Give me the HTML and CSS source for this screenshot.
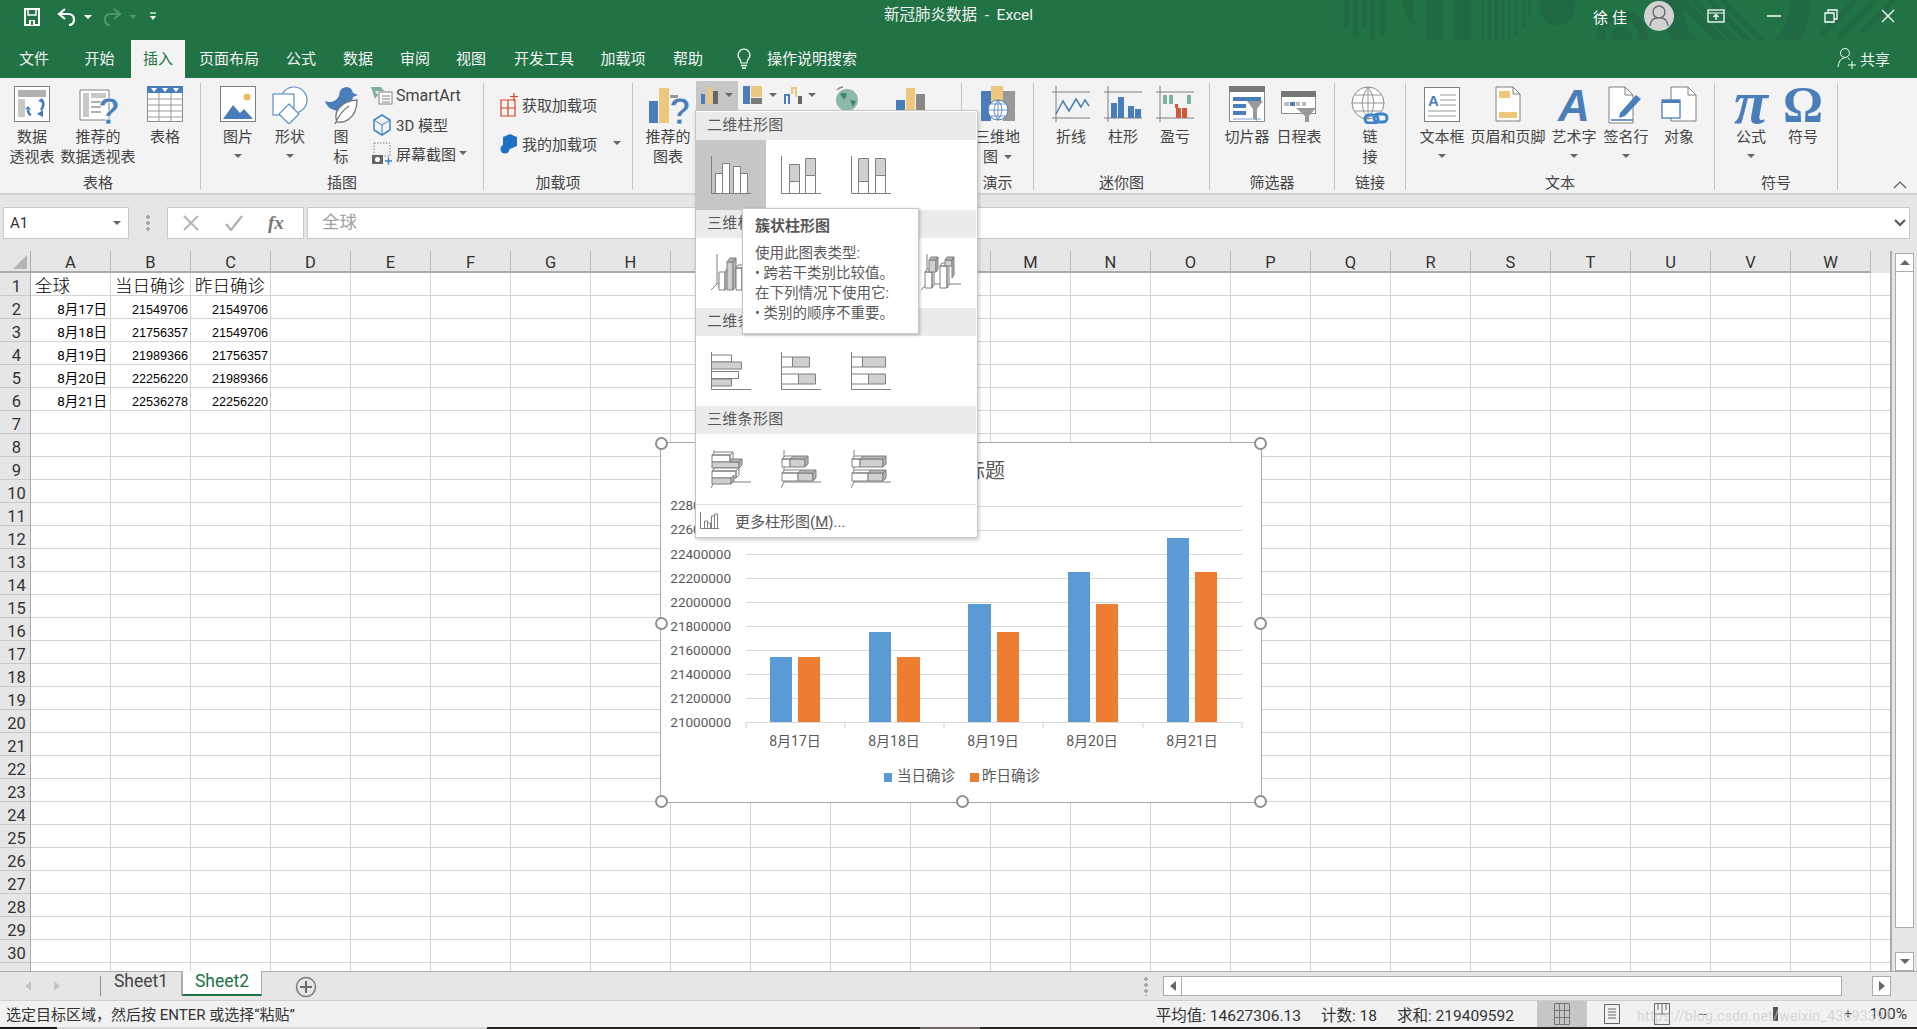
FILE: index.html
```html
<!DOCTYPE html>
<html lang="zh-CN">
<head>
<meta charset="utf-8">
<title>新冠肺炎数据 - Excel</title>
<link rel="stylesheet" href="styles.css">
</head>
<body>
<div class="app">
  <header class="titlebar">
    <svg class="deco" width="617" height="78" viewBox="1300 0 617 78">
      <g fill="#216845">
        <rect x="1344" y="0" width="5" height="29"/><rect x="1353" y="0" width="5" height="38"/><rect x="1362" y="0" width="5" height="29"/><rect x="1370" y="0" width="5" height="49"/><rect x="1380" y="0" width="5" height="35"/>
        <path d="M1402 0h11v27q-8-10-11-27z"/><path d="M1426 0h17v51q-9-3-17-9z"/><path d="M1455 0h16v57q-8 0-16-2z"/>
        <rect x="1481" y="0" width="3" height="54"/><rect x="1488" y="0" width="3" height="52"/><rect x="1495" y="0" width="3" height="50"/><rect x="1501" y="0" width="3" height="47"/><rect x="1508" y="0" width="3" height="42"/><rect x="1515" y="0" width="3" height="36"/><rect x="1522" y="0" width="3" height="28"/><rect x="1528" y="0" width="3" height="17"/>
        <circle cx="1557" cy="7" r="18"/><circle cx="1622" cy="36" r="10"/>
      </g>
      <circle cx="1622" cy="36" r="21" fill="none" stroke="#216845" stroke-width="9"/>
      <circle cx="1736" cy="3" r="64" fill="none" stroke="#216845" stroke-width="20"/>
      <g stroke="#216845" stroke-width="5" fill="none">
        <path d="M1678 0l66 68M1668 12l50 54M1682 0l70 68M1694 0l66 66M1708 0l60 60M1722 0l54 54"/>
        <path d="M1822 34l34-34M1838 38l38-38M1862 32l32-32"/>
      </g>
    </svg>
    <div class="qat">
      <svg class="q-save" width="18" height="18" viewBox="0 0 18 18"><path d="M2 1h14v16H2z" fill="none" stroke="#fff" stroke-width="2"/><path d="M5 1h8v6H5z" fill="none" stroke="#fff" stroke-width="1.5"/><path d="M6 12h6v5H6z" fill="#fff"/><path d="M8 13h2v4H8z" fill="#217346"/></svg>
      <svg class="q-undo" width="20" height="20" viewBox="0 0 20 20"><path d="M8 2L2 7l6 5" fill="none" stroke="#fff" stroke-width="2.2"/><path d="M3 7h8q6 0 6 5.500t-5 5.500" fill="none" stroke="#fff" stroke-width="2.2"/></svg>
      <i class="caret caret-w"></i>
      <svg class="q-redo" width="20" height="20" viewBox="0 0 20 20"><path d="M12 2l6 5-6 5" fill="none" stroke="#4f9370" stroke-width="2.2"/><path d="M17 7H9q-6 0-6 5.500t5 5.500" fill="none" stroke="#4f9370" stroke-width="2.200"/></svg>
      <i class="caret caret-dim"></i>
      <svg class="q-more" width="8" height="10" viewBox="0 0 8 10"><path d="M1 1h6" stroke="#fff" stroke-width="1.200"/><path d="M1 4h6L4 8z" fill="#fff"/></svg>
    </div>
    <div class="doc-title">新冠肺炎数据&nbsp; - &nbsp;Excel</div>
    <div class="winctl">
      <span class="user">徐佳</span>
      <svg class="avatar" width="30" height="30" viewBox="0 0 30 30"><circle cx="15" cy="15" r="15" fill="#d2d2d2"/><circle cx="15" cy="11" r="6" fill="none" stroke="#666" stroke-width="1.300"/><path d="M6 25q1-8 7-8M24 25q-1-8-7-8" fill="none" stroke="#666" stroke-width="1.300"/></svg>
      <svg class="w-disp" width="18" height="14" viewBox="0 0 18 14"><rect x="1" y="1" width="16" height="12" fill="none" stroke="#fff" stroke-width="1.300"/><path d="M1 4h16" stroke="#fff"/><path d="M9 11V6M6.500 8L9 5.500 11.500 8" fill="none" stroke="#fff" stroke-width="1.300"/></svg>
      <svg class="w-min" width="14" height="2" viewBox="0 0 14 2"><path d="M0 1h14" stroke="#fff" stroke-width="1.500"/></svg>
      <svg class="w-max" width="14" height="14" viewBox="0 0 14 14"><path d="M1 4h9v9H1zM4 4V1h9v9h-3" fill="none" stroke="#fff" stroke-width="1.300"/></svg>
      <svg class="w-close" width="14" height="14" viewBox="0 0 14 14"><path d="M1 1l12 12M13 1L1 13" stroke="#fff" stroke-width="1.300"/></svg>
    </div>
  </header>

  <nav class="tabbar">
    <span class="tab t-file">文件</span>
    <span class="tab t-home">开始</span>
    <span class="tab t-active">插入</span>
    <span class="tab t-page">页面布局</span>
    <span class="tab t-form">公式</span>
    <span class="tab t-data">数据</span>
    <span class="tab t-rev">审阅</span>
    <span class="tab t-view">视图</span>
    <span class="tab t-dev">开发工具</span>
    <span class="tab t-add">加载项</span>
    <span class="tab t-help">帮助</span>
    <svg class="bulb" width="16" height="22" viewBox="0 0 16 22"><path d="M5 15q0-3-2-5-2-3 0-6 2-3 5-3t5 3q2 3 0 6-2 2-2 5z" fill="none" stroke="#fff" stroke-width="1.200"/><path d="M5 17.500h6M6 20h4" stroke="#fff" stroke-width="1.300"/></svg>
    <span class="tab t-search">操作说明搜索</span>
    <span class="share">
      <svg width="20" height="22" viewBox="0 0 20 22"><circle cx="8" cy="6" r="4.500" fill="none" stroke="#fff"/><path d="M1 20q1-8 6-9M11 11q1 .500 2 2" fill="none" stroke="#fff"/><path d="M11 18h8M15 14v8" stroke="#fff"/></svg>
      共享
    </span>
  </nav>

  <section class="ribbon">
    <div class="group g1">
      <div class="items">
        <div class="big w64">
          <div class="ico"><svg width="36" height="36" viewBox="0 0 36 36"><rect x=".5" y=".5" width="35" height="35" fill="#fff" stroke="#808080"/><rect x="4" y="4" width="28" height="7" fill="#b0b0b0"/><rect x="4" y="13" width="7" height="18" fill="#c8c8c8"/><path d="M17 29q-3-1-3-5M28 14q3 5-1 10" fill="none" stroke="#3e78b5" stroke-width="2.500"/><path d="M11 23l3-3 3 4zM24 15l4-3 2 5zM23 28l6-4v7z" fill="#3e78b5"/></svg></div>
        <div class="lbl">数据<br>透视表</div></div>
        <div class="big w68">
          <div class="ico"><svg class="over" width="38" height="38" viewBox="0 0 38 38"><path d="M1 4h29v30H1z" fill="#fff" stroke="#808080"/><rect x="4" y="7" width="6" height="24" fill="#c8c8c8"/><rect x="12" y="7" width="15" height="5" fill="#c8c8c8"/><path d="M12 16h10M12 21h10M12 26h10" stroke="#b0b0b0" stroke-width="2"/><text x="19" y="38" class="qmark">?</text></svg></div>
        <div class="lbl">推荐的<br>数据透视表</div></div>
        <div class="big w66">
          <div class="ico"><svg width="36" height="36" viewBox="0 0 36 36"><rect x=".5" y=".5" width="35" height="35" fill="#fff" stroke="#8a8a8a"/><rect x="0" y="0" width="36" height="7" fill="#4a7eba"/><path d="M4 2h6l-3 4zM15 2h6l-3 4zM26 2h6l-3 4z" fill="#fff"/><path d="M0 13h36M0 19h36M0 25h36M0 31h36M12 7v29M24 7v29" stroke="#9a9a9a"/></svg></div>
        <div class="lbl">表格</div></div>
      </div>
      <div class="glabel">表格</div>
    </div>

    <div class="group g2">
      <div class="items">
        <div class="big w52">
          <div class="ico"><svg width="36" height="36" viewBox="0 0 36 36"><rect x=".5" y=".5" width="35" height="35" fill="#fff" stroke="#808080"/><circle cx="27" cy="11" r="3.500" fill="#ecb866"/><path d="M3 33l10-14 7 8 4-4 9 10z" fill="#4a7eba"/></svg></div>
        <div class="lbl">图片</div><i class="caret"></i></div>
        <div class="big w52">
          <div class="ico"><svg width="38" height="38" viewBox="0 0 38 38" fill="#fff" stroke="#5b8fc7" stroke-width="1.200"><circle cx="23" cy="14" r="13"/><rect x="2" y="8" width="21" height="21"/><path d="M18 18l10 10-10 10-10-10z"/></svg></div>
        <div class="lbl">形状</div><i class="caret"></i></div>
        <div class="big w50">
          <div class="ico"><svg width="36" height="38" viewBox="0 0 36 38"><path d="M2 15q5 2 9 0 3-1 5-5 0-8 7-9 6 0 7 6l5 2-5 2q-1 7-6 10-5 6-13 3Q4 22 2 15z" fill="#4a7eba"/><path d="M14 36q-3-8 2-14 5-7 18-8 0 13-8 19-5 4-12 3zM12 38q5-12 14-18" fill="#fff" stroke="#777" stroke-width="1.300"/></svg></div>
        <div class="lbl">图<br>标</div></div>
        <div class="small-col">
          <div class="sm"><svg width="22" height="18" viewBox="0 0 22 18"><path d="M0 0h10l3 4H4l3 4-3 4z" fill="#7eb09b"/><rect x="8" y="5" width="13" height="12" fill="#fff" stroke="#808080"/><path d="M11 9h8M11 12h8M11 15h8" stroke="#808080"/></svg><span class="lat">SmartArt</span></div>
          <div class="sm"><svg width="22" height="24" viewBox="0 0 22 24" fill="none" stroke="#3d85c6" stroke-width="1.500"><path d="M11 2l8 5v10l-8 5-8-5V7z"/><path d="M3 7l8 5 8-5M11 12v10" stroke-width="1"/></svg><span>3D 模型</span></div>
          <div class="sm"><svg width="22" height="24" viewBox="0 0 22 24"><rect x="3" y="1" width="16" height="13" fill="none" stroke="#808080" stroke-dasharray="1.500 1.500"/><rect x="1" y="13" width="11" height="9" fill="#666"/><circle cx="6.500" cy="17.500" r="2.500" fill="#fff"/><path d="M14 19h7M17.500 15.500v7" stroke="#3d85c6" stroke-width="1.500"/></svg><span>屏幕截图</span><i class="caret inline tight"></i></div>
        </div>
      </div>
      <div class="glabel">插图</div>
    </div>

    <div class="group g3">
      <div class="items addins">
        <div class="sm2"><svg width="18" height="26" viewBox="0 0 18 26" fill="none" stroke="#d24726" stroke-width="1.200"><path d="M1 8h14v16H1zM1 16h14M8 8v16"/><path d="M14 1v8M10 4.500h8"/></svg><span>获取加载项</span></div>
        <div class="sm2"><svg width="18" height="24" viewBox="0 0 18 24"><path d="M8 1l7 3v9l-7 3-7-3V4z" transform="translate(2 1)" fill="#1f71c4"/><circle cx="5" cy="17" r="4.500" fill="#1f71c4"/></svg><span>我的加载项</span><i class="caret inline wide"></i></div>
      </div>
      <div class="glabel">加载项</div>
    </div>

    <div class="group g4">
      <div class="items">
        <div class="big w56">
          <div class="ico"><svg class="over" width="40" height="38" viewBox="0 0 40 38"><rect x="1" y="15" width="9" height="22" fill="#4a7eba"/><rect x="11" y="2" width="10" height="35" fill="#ecc77c"/><rect x="22" y="9" width="8" height="3" fill="#999"/><text x="21" y="38" class="qmark">?</text></svg></div>
        <div class="lbl">推荐的<br>图表</div></div>
        <div class="mini hot"><svg width="18" height="20" viewBox="0 0 18 20"><rect x="0" y="8" width="4" height="10" fill="#4a7eba"/><rect x="6" y="1" width="5" height="17" fill="#ecc77c"/><rect x="12" y="5" width="5" height="13" fill="#666"/></svg><i class="caret inline"></i></div>
        <div class="mini m2"><svg width="20" height="20" viewBox="0 0 20 20"><rect x="0" y="0" width="7" height="18" fill="#4a7eba"/><rect x="8" y="0" width="11" height="11" fill="#ecc77c"/><rect x="8" y="12" width="11" height="6" fill="#7a7a7a"/></svg><i class="caret inline"></i></div>
        <div class="mini m3"><svg width="18" height="20" viewBox="0 0 18 20"><path d="M0 8h6v10H4V10H2v8H0z" fill="#4a7eba"/><path d="M7 1h6v10h-2V3H9v5H7z" fill="#ecc77c"/><rect x="14" y="10" width="4" height="8" fill="#666"/></svg><i class="caret inline"></i></div>
        <div class="mini m4"><svg width="24" height="26" viewBox="0 0 24 26"><circle cx="13" cy="14" r="11" fill="#8cb9a8"/><path d="M6 8q5-3 7 1l-3 5zM16 14l6 1-3 6z" fill="#3f8a6f"/><path d="M3 4q3-3 6-3" stroke="#888" stroke-width="1.500" fill="none"/></svg></div>
        <div class="mini m5"><svg width="38" height="30" viewBox="0 0 38 30"><rect x="0" y="14" width="9" height="16" fill="#4a7eba"/><rect x="10" y="2" width="9" height="28" fill="#ecc77c"/><rect x="20" y="8" width="9" height="22" fill="#888"/></svg></div>
      </div>
      <div class="glabel">图表</div>
    </div>

    <div class="group g5">
      <div class="items">
        <div class="big wfull">
          <div class="ico"><svg width="36" height="36" viewBox="0 0 36 36"><rect x="1" y="5" width="10" height="30" fill="#4a7eba"/><rect x="11" y="0" width="12" height="30" fill="#ecc77c"/><rect x="23" y="5" width="12" height="30" fill="#999"/><circle cx="18" cy="24" r="10" fill="#fff" stroke="#4a7eba"/><path d="M8 24h20M18 14v20M11 18h14M11 30h14M18 14q-8 10 0 20M18 14q8 10 0 20" fill="none" stroke="#4a7eba" stroke-width=".8"/></svg></div>
        <div class="lbl">三维地<br>图<i class="caret inline"></i></div></div>
      </div>
      <div class="glabel">演示</div>
    </div>

    <div class="group g6">
      <div class="items">
        <div class="big w52">
          <div class="ico"><svg width="38" height="36" viewBox="0 0 38 36" fill="none"><path d="M0 6h38M0 32h38M4 0v36" stroke="#808080"/><path d="M4 28l7-13 6 10 7-12 5 8 4-7 4 6" stroke="#4a7eba" stroke-width="1.500"/></svg></div>
        <div class="lbl">折线</div></div>
        <div class="big w52">
          <div class="ico"><svg width="38" height="36" viewBox="0 0 38 36"><path d="M0 6h38M0 32h38M4 0v36" stroke="#808080" fill="none"/><path d="M7 17h6v15H7zM14 11h6v21h-6zM24 20h6v12h-6zM31 23h6v9h-6z" fill="#4a7eba"/></svg></div>
        <div class="lbl">柱形</div></div>
        <div class="big w52">
          <div class="ico"><svg width="38" height="36" viewBox="0 0 38 36"><path d="M0 6h38M0 32h38M4 0v36" stroke="#808080" fill="none"/><path d="M7 9h4v9H7zM13 9h4v9h-4zM31 9h4v9h-4z" fill="#7eb09b"/><path d="M19 18h3v4h-3zM20 22h5v10h-5zM26 22h5v10h-5z" fill="#d2583a"/></svg></div>
        <div class="lbl">盈亏</div></div>
      </div>
      <div class="glabel">迷你图</div>
    </div>

    <div class="group g7">
      <div class="items">
        <div class="big w52">
          <div class="ico"><svg width="36" height="36" viewBox="0 0 36 36"><rect x=".5" y=".5" width="35" height="35" fill="#fff" stroke="#8a8a8a"/><rect width="36" height="6" fill="#777"/><path d="M4 11h28v4H4zM4 18h13v4H4zM4 25h13v4H4z" fill="#4a7eba"/><path d="M4 32h28v2H4z" fill="#bcd0e6"/><path d="M18 15h16l-6 8v12l-4-3v-9z" fill="#999"/></svg></div>
        <div class="lbl">切片器</div></div>
        <div class="big w52">
          <div class="ico"><svg width="36" height="36" viewBox="0 0 36 36"><rect x=".5" y="5.500" width="34" height="22" fill="#fff" stroke="#8a8a8a"/><rect y="5" width="35" height="6" fill="#777"/><path d="M3 16h5v4H3zM15 16h4v4h-4zM21 16h4v4h-4z" fill="#bbb"/><path d="M9 16h5v4H9z" fill="#4a7eba"/><path d="M15 22h20l-7 8v6h-4v-6z" fill="#999"/></svg></div>
        <div class="lbl">日程表</div></div>
      </div>
      <div class="glabel">筛选器</div>
    </div>

    <div class="group g8">
      <div class="items">
        <div class="big wfull">
          <div class="ico"><svg width="38" height="38" viewBox="0 0 38 38"><circle cx="17" cy="17" r="16" fill="#fff" stroke="#8a8a8a"/><path d="M1 17h32M17 1v32M4 9h26M4 25h26M17 1q-12 16 0 32M17 1q12 16 0 32" fill="none" stroke="#8a8a8a" stroke-width=".9"/><rect x="14" y="29" width="13" height="8" rx="4" fill="none" stroke="#3d85c6" stroke-width="3"/><rect x="23" y="28" width="13" height="8" rx="4" fill="none" stroke="#3d85c6" stroke-width="3"/></svg></div>
        <div class="lbl">链<br>接</div></div>
      </div>
      <div class="glabel">链接</div>
    </div>

    <div class="group g9">
      <div class="items">
        <div class="big w58">
          <div class="ico"><svg width="36" height="36" viewBox="0 0 36 36"><rect x=".5" y="1.500" width="35" height="34" fill="#fff" stroke="#808080"/><text x="4" y="20" class="letter-a">A</text><path d="M16 9h16M16 14h16M16 19h16M4 25h28M4 30h28" stroke="#999"/></svg></div>
        <div class="lbl">文本框</div><i class="caret"></i></div>
        <div class="big w74">
          <div class="ico"><svg width="26" height="36" viewBox="0 0 26 36"><path d="M1 1h17l7 7v27H1z" fill="#fff" stroke="#808080"/><path d="M18 1v7h7" fill="none" stroke="#808080"/><rect x="4" y="5" width="11" height="7" fill="#ecc77c"/><rect x="4" y="26" width="18" height="6" fill="#ecc77c"/></svg></div>
        <div class="lbl">页眉和页脚</div></div>
        <div class="big w52 gap3">
          <div class="ico"><span class="arttext">A</span></div>
        <div class="lbl">艺术字</div><i class="caret"></i></div>
        <div class="big w52">
          <div class="ico"><svg width="36" height="38" viewBox="0 0 36 38"><path d="M1 1h16l8 8v28H1z" fill="#fff" stroke="#808080"/><path d="M17 1v8h8" fill="none" stroke="#808080"/><path d="M12 27l16-18 5 4-16 17-6 2z" fill="#4a7eba"/><path d="M3 34h22" stroke="#4a7eba" stroke-width="1.500"/></svg></div>
        <div class="lbl">签名行</div><i class="caret"></i></div>
        <div class="big w54">
          <div class="ico"><svg width="36" height="36" viewBox="0 0 36 36"><path d="M10 1h17l8 8v26H10z" fill="#fff" stroke="#808080"/><path d="M27 1v8h8" fill="none" stroke="#808080"/><rect x="1" y="14" width="18" height="18" fill="#fff" stroke="#4a7eba" stroke-width="1.300"/><rect x="1" y="14" width="18" height="3" fill="#4a7eba"/></svg></div>
        <div class="lbl">对象</div></div>
      </div>
      <div class="glabel">文本</div>
    </div>

    <div class="group g10">
      <div class="items">
        <div class="big w52">
          <div class="ico"><span class="sym pi">π</span></div>
        <div class="lbl">公式</div><i class="caret"></i></div>
        <div class="big w52">
          <div class="ico"><span class="sym omega">Ω</span></div>
        <div class="lbl">符号</div></div>
      </div>
      <div class="glabel">符号</div>
    </div>

    <div class="collapse"><svg width="14" height="8" viewBox="0 0 14 8"><path d="M1 7l6-6 6 6" fill="none" stroke="#555" stroke-width="1.100"/></svg></div>
  </section>

  <section class="formula">
    <div class="namebox"><span>A1</span><i class="caret"></i></div>
    <div class="grip"></div>
    <div class="fbtns">
      <svg width="16" height="16" viewBox="0 0 16 16"><path d="M1 1l14 14M15 1L1 15" stroke="#b5b5b5" stroke-width="2"/></svg>
      <svg width="18" height="16" viewBox="0 0 18 16"><path d="M1 9l5 6L17 1" fill="none" stroke="#b5b5b5" stroke-width="2.500"/></svg>
      <span class="fx">fx</span>
    </div>
    <div class="finput"><span>全球</span><svg class="fdrop" width="12" height="8" viewBox="0 0 12 8"><path d="M1 1l5 5 5-5" fill="none" stroke="#555" stroke-width="2"/></svg></div>
  </section>

  <section class="sheet">
    <div class="grid-wrap">
      <div class="colhead">
        <div class="corner"><i></i></div>
        <span>A</span><span>B</span><span>C</span><span>D</span><span>E</span><span>F</span><span>G</span><span>H</span><span>I</span><span>J</span><span>K</span><span>L</span><span>M</span><span>N</span><span>O</span><span>P</span><span>Q</span><span>R</span><span>S</span><span>T</span><span>U</span><span>V</span><span>W</span>
      </div>
      <div class="gridbody">
        <div class="rowhead">
          <span>1</span><span>2</span><span>3</span><span>4</span><span>5</span><span>6</span><span>7</span><span>8</span><span>9</span><span>10</span><span>11</span><span>12</span><span>13</span><span>14</span><span>15</span><span>16</span><span>17</span><span>18</span><span>19</span><span>20</span><span>21</span><span>22</span><span>23</span><span>24</span><span>25</span><span>26</span><span>27</span><span>28</span><span>29</span><span>30</span>
        </div>
        <div class="cells">
          <div class="c-t">全球</div><div class="c-t">当日确诊</div><div class="c-t">昨日确诊</div>
          <div class="c-d">8月17日</div><div class="c-n">21549706</div><div class="c-n">21549706</div>
          <div class="c-d">8月18日</div><div class="c-n">21756357</div><div class="c-n">21549706</div>
          <div class="c-d">8月19日</div><div class="c-n">21989366</div><div class="c-n">21756357</div>
          <div class="c-d">8月20日</div><div class="c-n">22256220</div><div class="c-n">21989366</div>
          <div class="c-d">8月21日</div><div class="c-n">22536278</div><div class="c-n">22256220</div>
        </div>
      </div>
    </div>
    <div class="vscroll">
      <div class="sbtn"><i class="tri-up"></i></div>
      <div class="vthumb"></div>
      <div class="sbtn"><i class="tri-down"></i></div>
    </div>
  </section>

  <section class="sheetbar">
    <div class="navs"><i class="tl"></i><i class="tr"></i></div>
    <div class="stab">Sheet1</div>
    <div class="stab active">Sheet2</div>
    <svg class="addsheet" width="22" height="22" viewBox="0 0 22 22"><circle cx="11" cy="11" r="9.500" fill="none" stroke="#7a7a7a" stroke-width="1.500"/><path d="M11 5v12M5 11h12" stroke="#6a6a6a" stroke-width="2"/></svg>
    <div class="hscroll">
      <div class="grip h"></div>
      <div class="hbtn"><i class="tl dark"></i></div>
      <div class="hthumb"></div>
      <div class="hbtn"><i class="tr dark"></i></div>
    </div>
  </section>

  <footer class="status">
    <span class="msg">选定目标区域，然后按 ENTER 或选择“粘贴”</span>
    <span class="st s1">平均值: 14627306.13</span>
    <span class="st s2">计数: 18</span>
    <span class="st s3">求和: 219409592</span>
    <span class="view on"><svg width="16" height="22" viewBox="0 0 16 22"><path d="M.5 .5h15v21H.5zM.5 7.500h15M.5 14.500h15M5.500 .5v21M10.500 .5v21" fill="none" stroke="#777"/></svg></span>
    <span class="view"><svg width="16" height="20" viewBox="0 0 16 20"><path d="M.5 .5h15v19H.5z" fill="none" stroke="#666"/><path d="M4 5h8M4 8h8M4 11h8M4 14h8" stroke="#666"/></svg></span>
    <span class="view"><svg width="16" height="22" viewBox="0 0 16 22" fill="none" stroke="#666"><path d="M.5 .5h15v21H.5zM0 11h16M8 0v11M4 0v7M12 0v7"/></svg></span>
    <span class="zoomer"><i class="zminus"></i><i class="zthumb"></i><i class="zplus">+</i></span>
    <span class="pct">100%</span>
    <span class="watermark">https://blog.csdn.net/weixin_43693391</span>
  </footer>
  <div class="edge"><i class="e1"></i><i class="e2"></i><i class="e3"></i><i class="e4"></i><i class="e5"></i></div>

  <div class="chart">
    <svg width="600" height="359" viewBox="661 443 600 359">
      <rect x="661" y="443" width="600" height="359" fill="#fff"/>
      <text x="965" y="478" class="ch-title" text-anchor="middle">图表标题</text>
      <g stroke="#d9d9d9" stroke-width="1.200">
        <path d="M746 506.500h496M746 530.500h496M746 554.500h496M746 578.500h496M746 602.500h496M746 626.500h496M746 650.500h496M746 674.500h496M746 698.500h496"/>
        <path d="M746 722.500h496M746 722v6M845 722v6M944 722v6M1043 722v6M1143 722v6M1242 722v6"/>
      </g>
      <g class="ch-axis" text-anchor="end">
        <text x="731" y="510">22800000</text><text x="731" y="534">22600000</text><text x="731" y="559">22400000</text><text x="731" y="583">22200000</text><text x="731" y="607">22000000</text><text x="731" y="631">21800000</text><text x="731" y="655">21600000</text><text x="731" y="679">21400000</text><text x="731" y="703">21200000</text><text x="731" y="727">21000000</text>
      </g>
      <g fill="#5b9bd5">
        <rect x="770" y="657" width="22" height="65"/><rect x="869" y="632" width="22" height="90"/><rect x="968" y="604" width="23" height="118"/><rect x="1068" y="572" width="22" height="150"/><rect x="1167" y="538" width="22" height="184"/>
      </g>
      <g fill="#ed7d31">
        <rect x="798" y="657" width="22" height="65"/><rect x="897" y="657" width="23" height="65"/><rect x="997" y="632" width="22" height="90"/><rect x="1096" y="604" width="22" height="118"/><rect x="1195" y="572" width="22" height="150"/>
      </g>
      <g class="ch-cat" text-anchor="middle">
        <text x="795" y="746">8月17日</text><text x="894" y="746">8月18日</text><text x="993" y="746">8月19日</text><text x="1092" y="746">8月20日</text><text x="1192" y="746">8月21日</text>
      </g>
      <rect x="884" y="773" width="8" height="9" fill="#5b9bd5"/><text x="897" y="781" class="ch-legend">当日确诊</text>
      <rect x="970" y="773" width="9" height="9" fill="#ed7d31"/><text x="982" y="781" class="ch-legend">昨日确诊</text>
    </svg>
    <i class="hd tl-h"></i><i class="hd tr-h"></i><i class="hd ml-h"></i><i class="hd mr-h"></i><i class="hd bl-h"></i><i class="hd bm-h"></i><i class="hd br-h"></i>
  </div>

  <div class="menu">
    <div class="mh">二维柱形图</div>
    <div class="mrow">
      <div class="mcell sel"><svg width="40" height="38" viewBox="0 0 40 38" fill="#fff" stroke="#7f7f7f"><path d="M.5 0v37.500H40" fill="none"/><path d="M4.500 17.500h7v20h-7zM11.500 7.500h7v30h-7zM22.500 10.500h7v27h-7zM29.500 17.500h7v20h-7z"/></svg></div>
      <div class="mcell"><svg width="40" height="38" viewBox="0 0 40 38" fill="#fff" stroke="#7f7f7f"><path d="M.5 0v37.500H40" fill="none"/><path d="M8.500 8.500h10v17h-10z" fill="#d0d0d0"/><path d="M8.500 25.500h10v12h-10z"/><path d="M24.500 2.500h10v17h-10z" fill="#d0d0d0"/><path d="M24.500 19.500h10v18h-10z"/></svg></div>
      <div class="mcell"><svg width="40" height="38" viewBox="0 0 40 38" fill="#fff" stroke="#7f7f7f"><path d="M.5 0v37.500H40" fill="none"/><path d="M7.500 2.500h10v23h-10z" fill="#d0d0d0"/><path d="M7.500 25.500h10v12h-10z"/><path d="M24.500 2.500h10v17h-10z" fill="#d0d0d0"/><path d="M24.500 19.500h10v18h-10z"/></svg></div>
    </div>
    <div class="mh">三维柱形图</div>
    <div class="mrow">
      <div class="mcell"><svg width="40" height="38" viewBox="0 0 40 38" fill="#fff" stroke="#7f7f7f"><path d="M6 0v30L0 36M6 30h34" fill="none"/><path d="M8 18h6v18H8zM14 18l2-3v18l-2 3z"/><path d="M16 8h6v28h-6z" fill="#d0d0d0"/><path d="M16 8l3-4h6l-3 4zM22 8l3-4v28l-3 4z" fill="#b5b5b5"/><path d="M25 14h6v22h-6zM25 14l2-3h6l-2 3zM31 14l2-3v22l-2 3z"/></svg></div>
      <div class="mcell"></div>
      <div class="mcell"></div>
      <div class="mcell"><svg width="40" height="38" viewBox="0 0 40 38" fill="#fff" stroke="#7f7f7f"><path d="M6 0v30L0 36M6 30h34" fill="none"/><path d="M4 18h7v16H4zM4 18l2-3h7l-2 3zM11 18l2-3v16l-2 3z"/><path d="M8 6h7v12H8z" fill="#d0d0d0"/><path d="M8 6l2-3h7l-2 3zM15 6l2-3v12l-2 3z" fill="#b5b5b5"/><path d="M19 12h7v22h-7zM19 12l2-3h7l-2 3zM26 12l2-3v22l-2 3z"/><path d="M24 6h7v6h-7z" fill="#d0d0d0"/><path d="M24 6l2-3h7l-2 3zM31 6l2-3v18l-2 3z" fill="#b5b5b5"/></svg></div>
    </div>
    <div class="mh">二维条形图</div>
    <div class="mrow">
      <div class="mcell"><svg width="40" height="38" viewBox="0 0 40 38" fill="#fff" stroke="#7f7f7f"><path d="M.5 0v37.500H40" fill="none"/><path d="M.5 3h20v7H.5z"/><path d="M.5 10h30v7H.5z" fill="#d0d0d0"/><path d="M.5 19.500h27v7H.5z"/><path d="M.5 27h20v7H.5z" fill="#d0d0d0"/></svg></div>
      <div class="mcell"><svg width="40" height="38" viewBox="0 0 40 38" fill="#fff" stroke="#7f7f7f"><path d="M.5 0v37.500H40" fill="none"/><path d="M.5 5h11v10H.5z"/><path d="M11.500 5h17v10h-17z" fill="#d0d0d0"/><path d="M.5 22h17v10H.5z"/><path d="M17.500 22h17v10h-17z" fill="#d0d0d0"/></svg></div>
      <div class="mcell"><svg width="40" height="38" viewBox="0 0 40 38" fill="#fff" stroke="#7f7f7f"><path d="M.5 0v37.500H40" fill="none"/><path d="M.5 5h11v10H.5z"/><path d="M11.500 5h23v10h-23z" fill="#d0d0d0"/><path d="M.5 22h17v10H.5z"/><path d="M17.500 22h17v10h-17z" fill="#d0d0d0"/></svg></div>
    </div>
    <div class="mh">三维条形图</div>
    <div class="mrow">
      <div class="mcell"><svg width="40" height="38" viewBox="0 0 40 38" fill="#fff" stroke="#7f7f7f"><path d="M3 0v32L0 38M3 32h37" fill="none"/><path d="M1 5h18v7H1zM1 5l3-3h18l-3 3zM19 5l3-3v7l-3 3z"/><path d="M1 12h27v6H1z" fill="#d0d0d0"/><path d="M28 12l3-3v6l-3 3zM20 9h11l-3 3h-8z" fill="#b5b5b5"/><path d="M1 21h24v7H1zM1 21l3-3h24l-3 3zM25 21l3-3v7l-3 3z"/><path d="M1 28h19v6H1z" fill="#d0d0d0"/><path d="M20 28l3-3v6l-3 3z" fill="#b5b5b5"/></svg></div>
      <div class="mcell"><svg width="40" height="38" viewBox="0 0 40 38" fill="#fff" stroke="#7f7f7f"><path d="M3 0v32L0 38M3 32h37" fill="none"/><path d="M1 9h8v8H1zM1 9l3-3h8l-3 3z"/><path d="M9 9h15v8H9z" fill="#d0d0d0"/><path d="M9 9l3-3h15l-3 3zM24 9l3-3v8l-3 3z" fill="#b5b5b5"/><path d="M1 23h16v8H1zM1 23l3-3h16l-3 3z"/><path d="M17 23h15v8H17z" fill="#d0d0d0"/><path d="M17 23l3-3h15l-3 3zM32 23l3-3v8l-3 3z" fill="#b5b5b5"/></svg></div>
      <div class="mcell"><svg width="40" height="38" viewBox="0 0 40 38" fill="#fff" stroke="#7f7f7f"><path d="M3 0v32L0 38M3 32h37" fill="none"/><path d="M1 9h8v8H1zM1 9l3-3h8l-3 3z"/><path d="M9 9h23v8H9z" fill="#d0d0d0"/><path d="M9 9l3-3h23l-3 3zM32 9l3-3v8l-3 3z" fill="#b5b5b5"/><path d="M1 23h16v8H1zM1 23l3-3h16l-3 3z"/><path d="M17 23h15v8H17z" fill="#d0d0d0"/><path d="M17 23l3-3h15l-3 3zM32 23l3-3v8l-3 3z" fill="#b5b5b5"/></svg></div>
    </div>
    <div class="mmore">
      <svg width="19" height="17" viewBox="0 0 19 17" fill="none" stroke="#7f7f7f"><path d="M.5 0v16.500H19"/><path d="M4.500 16V9h3v7M7.500 16V11h3v5M11.500 16V4h3v12M14.500 16V2h3v14"/></svg>
      <span>更多柱形图(<u>M</u>)...</span>
    </div>
  </div>

  <div class="tip">
    <div class="tip-title">簇状柱形图</div>
    <div class="tip-line tip-first">使用此图表类型:</div>
    <div class="tip-line">• 跨若干类别比较值。</div>
    <div class="tip-line">在下列情况下使用它:</div>
    <div class="tip-line">• 类别的顺序不重要。</div>
  </div>
</div>
</body>
</html>
```

FILE: styles.css
```css
* { box-sizing: border-box; }
html, body { margin: 0; padding: 0; }
body {
  font-family: Roboto, "Noto Sans CJK SC", sans-serif;
  background: #e6e6e6;
  overflow: hidden;
}
i { display: block; font-style: normal; }
svg { display: block; flex: none; }
svg.over { overflow: visible; }
.app {
  position: relative;
  width: 1917px;
  height: 1029px;
  display: flex;
  flex-direction: column;
  overflow: hidden;
}

/* Title bar */
.titlebar {
  position: relative;
  height: 40px;
  background: #217346;
  display: grid;
  grid-template-columns: 1fr auto 1fr;
  color: #fff;
  flex: none;
}
.deco { position: absolute; left: 1300px; top: 0; }
.qat { position: relative; display: flex; align-items: center; height: 34px; padding-left: 23px; }
.q-undo { margin-left: 16px; }
.q-redo { margin-left: 10px; }
.q-more { margin-left: 12px; }
.qat .caret { margin-left: 7px; }
.caret {
  width: 0; height: 0;
  border-left: 4px solid transparent;
  border-right: 4px solid transparent;
  border-top: 4px solid #666;
  margin: 8px auto 0;
}
.caret-w { border-top-color: #fff; margin: 0; }
.caret-dim { border-top-color: #4f9370; margin: 0; }
.caret.inline { display: inline-block; margin: 0 0 2px 6px; vertical-align: middle; flex: none; }
.caret.inline.wide { margin-left: 12px; }
.caret.inline.tight { margin-left: 0; }
.doc-title { position: relative; font-size: 15.500px; line-height: 30px; color: #f2f2f2; }
.winctl { position: relative; display: flex; align-items: center; justify-content: flex-end; height: 32px; padding-right: 22px; }
.user { font-size: 15px; letter-spacing: 4px; margin-right: 13px; }
.w-disp { margin-left: 33px; }
.w-min { margin-left: 42px; }
.w-max { margin-left: 43px; }
.w-close { margin-left: 43px; }

/* Tabs */
.tabbar {
  height: 38px;
  background: #217346;
  display: flex;
  align-items: stretch;
  color: #f4f4f4;
  font-size: 15px;
  flex: none;
  position: relative;
}
.tab { display: flex; align-items: center; justify-content: center; padding-bottom: 3px; flex: none; }
.t-file { width: 68px; }
.t-home { width: 63px; }
.t-active { width: 54px; background: #f3f3f3; color: #217346; }
.t-page { width: 88px; }
.t-form { width: 56px; }
.t-data { width: 58px; }
.t-rev { width: 56px; }
.t-view { width: 56px; }
.t-dev { width: 90px; }
.t-add { width: 68px; }
.t-help { width: 62px; }
.bulb { margin: 8px 0 0 17px; }
.t-search { margin-left: 15px; }
.share { margin-left: auto; display: flex; align-items: center; padding: 0 27px 2px 0; gap: 3px; font-size: 15px; }

/* Ribbon */
.ribbon {
  height: 117px;
  background: #f3f3f3;
  border-bottom: 2px solid #d2d2d2;
  display: flex;
  padding-top: 5px;
  padding-bottom: 3px;
  color: #444;
  font-size: 15px;
  flex: none;
  position: relative;
}
.group { display: flex; flex-direction: column; border-right: 1px solid #c6c6c6; flex: none; }
.items { display: flex; flex: 1; min-height: 0; }
.glabel { height: 21px; padding-top: 4px; line-height: 20px; text-align: center; }
.g1 { width: 201px; }
.g1 .glabel { padding-right: 4px; }
.g2 { width: 283px; }
.g3 { width: 149px; }
.g4 { width: 329px; }
.g5 { width: 72px; }
.g6 { width: 176px; }
.g7 { width: 125px; }
.g8 { width: 71px; }
.g9 { width: 309px; }
.g10 { width: 123px; }
.g2 .items, .g6 .items, .g7 .items { padding-left: 11px; }
.g4 .items { padding-left: 7px; }
.g9 .items { padding-left: 7px; }
.g10 .items { padding-left: 10px; }
.big { display: flex; flex-direction: column; align-items: center; flex: none; padding-top: 3px; line-height: 20px; text-align: center; }
.ico { height: 41px; display: flex; align-items: flex-start; justify-content: center; white-space: nowrap; }
.lbl { white-space: nowrap; }
.big .caret:not(.inline) { margin-top: 7px; }
.w50 { width: 50px; } .w52 { width: 52px; } .w54 { width: 54px; } .w56 { width: 56px; } .w58 { width: 58px; }
.w64 { width: 64px; } .w66 { width: 66px; } .w68 { width: 68px; } .w74 { width: 74px; }
.wfull { width: 100%; }
.gap3 { margin-left: 3px; }
.qmark { font: 700 36px "Liberation Sans", sans-serif; fill: #4a7eba; stroke: #fff; stroke-width: .6px; }
.letter-a { font: 700 15px "Liberation Sans", sans-serif; fill: #4a7eba; }
.arttext { font: italic 700 44px/40px "Liberation Sans", sans-serif; color: #4a7eba; }
.sym { font: 700 50px/36px "Liberation Serif", serif; color: #4a7eba; }
.pi { font: italic 700 62px/32px "Liberation Serif", serif; }
.small-col { margin-left: 5px; margin-top: -3px; display: flex; flex-direction: column; padding-top: 1px; }
.sm { display: flex; align-items: center; height: 29px; gap: 3px; white-space: nowrap; }
.lat { font-size: 16px; }
.addins { flex-direction: column; padding-left: 16px; padding-top: 2px; }
.sm2 { display: flex; align-items: center; height: 39px; gap: 4px; white-space: nowrap; }
.mini { display: flex; align-items: center; flex: none; height: 29px; margin-top: -2px; gap: 0; }
.hot { width: 42px; background: #c6c6c6; padding-left: 5px; }
.m2 { width: 36px; margin-left: 5px; }
.m3 { width: 32px; margin-left: 5px; }
.m4 { width: 24px; margin-left: 18px; align-items: flex-start; padding-top: 5px; height: 40px; }
.m5 { margin-left: 38px; align-items: flex-start; padding-top: 5px; height: 40px; }
.collapse { flex: 1; display: flex; justify-content: flex-end; align-items: flex-end; padding: 0 10px 1px 0; }

/* Formula bar */
.formula { height: 56px; background: #e6e6e6; display: flex; align-items: flex-start; padding: 12px 7px 0 3px; flex: none; }
.namebox {
  width: 126px; height: 32px; background: #fff; border: 1px solid #c8c8c8;
  display: flex; align-items: center; justify-content: space-between;
  padding: 0 7px 0 6px; font-size: 15px; color: #333;
}
.namebox .caret { margin: 0; }
.grip { width: 38px; height: 18px; margin-top: 7px; background: radial-gradient(circle, #a8a8a8 1.700px, transparent 2px) center top / 4px 6px repeat-y; }
.fbtns { width: 137px; height: 32px; background: #fff; border: 1px solid #c8c8c8; display: flex; align-items: center; padding-left: 15px; gap: 26px; }
.fx { font: italic 700 19px "Liberation Serif", serif; color: #777; margin-left: -1px; }
.finput { flex: 1; margin-left: 3px; height: 32px; background: #fff; border: 1px solid #c8c8c8; display: flex; align-items: center; justify-content: space-between; padding: 0 3px 6px 14px; font-size: 17.500px; color: #a0a0a0; }
.fdrop { margin-top: 6px; }

/* Sheet */
.sheet { height: 720px; display: flex; background: #e6e6e6; flex: none; }
.grid-wrap { width: 1892px; display: flex; flex-direction: column; border-right: 2px solid #ababab; }
.colhead { display: flex; height: 22px; flex: none; }
.corner { width: 31px; flex: none; border-bottom: 2px solid #ababab; border-right: 1px solid #ababab; position: relative; }
.corner i { position: absolute; right: 3px; bottom: 2px; width: 0; height: 0; border-left: 14px solid transparent; border-bottom: 14px solid #b4b4b4; }
.colhead span { width: 80px; flex: none; text-align: center; font-size: 16.500px; line-height: 24px; height: 22px; overflow: hidden; color: #333; border-right: 1px solid #bcbcbc; border-bottom: 2px solid #ababab; }
.gridbody { display: flex; flex: 1; min-height: 0; overflow: hidden; }
.rowhead { width: 31px; flex: none; border-right: 1px solid #ababab; }
.rowhead span { display: block; height: 23px; line-height: 27px; overflow: hidden; border-bottom: 1px solid #c8c8c8; padding-left: 3px; text-align: center; font-size: 16.500px; color: #333; }
.cells {
  flex: 1;
  display: grid;
  grid-template-columns: repeat(3, 80px);
  grid-auto-rows: 23px;
  background-color: #fff;
  background-image:
    linear-gradient(to right, transparent 79px, #d4d4d4 79px),
    linear-gradient(to bottom, transparent 22px, #d4d4d4 22px);
  background-size: 80px 23px;
  color: #000;
}
.c-t { font-size: 17.500px; font-weight: 300; line-height: 26px; padding-left: 4px; white-space: nowrap; }
.c-d { font-size: 13.500px; line-height: 27px; text-align: right; padding-right: 4px; }
.c-n { font: 12.600px/29px "Liberation Sans", sans-serif; text-align: right; padding-right: 3px; }
.vscroll { width: 19px; margin: 2px 0 0 3px; display: flex; flex-direction: column; }
.sbtn { height: 19px; background: #fff; border: 1px solid #ababab; display: flex; align-items: center; justify-content: center; flex: none; }
.tri-up { width: 0; height: 0; border-left: 5px solid transparent; border-right: 5px solid transparent; border-bottom: 5px solid #666; }
.tri-down { width: 0; height: 0; border-left: 5px solid transparent; border-right: 5px solid transparent; border-top: 5px solid #666; }
.vthumb { flex: 1; background: #fff; border: 1px solid #ababab; border-top: 0; margin-bottom: 24px; }

/* Sheet tabs */
.sheetbar { height: 29px; background: #e6e6e6; border-top: 1px solid #ababab; display: flex; align-items: flex-start; flex: none; }
.navs { width: 101px; height: 20px; margin-top: 4px; padding-left: 25px; display: flex; gap: 23px; align-items: center; border-right: 1px solid #8f8f8f; }
.tl { width: 0; height: 0; border-top: 5px solid transparent; border-bottom: 5px solid transparent; border-right: 6px solid #c4c4c4; }
.tr { width: 0; height: 0; border-top: 5px solid transparent; border-bottom: 5px solid transparent; border-left: 6px solid #c4c4c4; }
.tl.dark { border-right-color: #666; }
.tr.dark { border-left-color: #666; }
.stab { width: 81px; height: 24px; text-align: center; font-size: 17.500px; line-height: 19px; color: #444; border-right: 1px solid #ababab; }
.stab.active { height: 25px; margin-top: -1px; padding-top: 1px; width: 80px; background: #fff; color: #217346; border-left: 1px solid #ababab; border-bottom: 2px solid #217346; border-top: 0; }
.addsheet { margin: 4px 0 0 33px; }
.hscroll { margin-left: auto; margin-right: 25px; margin-top: 4px; display: flex; width: 751px; height: 20px; align-items: stretch; }
.hbtn { width: 19px; background: #fff; border: 1px solid #ababab; display: flex; align-items: center; justify-content: center; flex: none; }
.hthumb { width: 660px; background: #fff; border: 1px solid #ababab; border-left: 0; margin-right: 30px; }
.grip.h { flex: none; width: 9px; height: 20px; margin: 0 13px 0 0; }

/* Status */
.status { height: 27px; background: #f1f1f1; border-top: 1px solid #cfcfcf; display: flex; align-items: center; font-size: 15.500px; color: #333; flex: none; position: relative; }
.msg { margin-left: 6px; white-space: nowrap; font-size: 15px; padding-bottom: 2px; }
.st { white-space: nowrap; }
.s1 { margin-left: auto; }
.s2 { margin-left: 20px; }
.s3 { margin-left: 20px; }
.view { width: 50px; height: 26px; display: flex; align-items: center; justify-content: center; flex: none; }
.view.on { background: #c6c6c6; margin-left: 23px; }
.zoomer { width: 190px; display: flex; align-items: center; flex: none; margin-left: 12px; margin-right: 28px; height: 20px; }
.zminus { width: 8px; height: 1px; background: #666; }
.zthumb { width: 5px; height: 14px; background: #555; margin-left: 66px; }
.zplus { margin-left: 66px; font-size: 14px; line-height: 14px; color: #555; }
.pct { white-space: nowrap; position: absolute; right: 10px; }
.watermark { position: absolute; left: 1637px; top: 6px; font-size: 14px; line-height: 18px; letter-spacing: .3px; color: rgba(205, 205, 205, .75); white-space: nowrap; }
.edge { height: 2px; display: flex; flex: none; }
.e1 { width: 57px; background: #1a1a1a; }
.e2 { width: 430px; background: #d8d8d8; }
.e3 { width: 433px; background: #2a2420; }
.e4 { width: 60px; background: #70665f; }
.e5 { flex: 1; background: #2a2420; }

/* Chart object */
.chart { position: absolute; left: 661px; top: 443px; width: 600px; height: 359px; outline: 2px solid #a8a8a8; outline-offset: -1px; }
.chart svg { position: relative; }
.ch-title { font-size: 20px; fill: #595959; font-family: "Noto Sans CJK SC", sans-serif; }
.ch-axis { font-size: 13.500px; fill: #595959; }
.ch-cat { font-size: 14px; fill: #595959; }
.ch-legend { font-size: 14.500px; fill: #595959; }
.hd { position: absolute; width: 13px; height: 13px; border-radius: 50%; background: #fff; border: 2px solid #8f8f8f; }
.tl-h { left: -6px; top: -6px; }
.tr-h { right: -6px; top: -6px; }
.ml-h { left: -6px; top: 174px; }
.mr-h { right: -6px; top: 174px; }
.bl-h { left: -6px; bottom: -6px; }
.bm-h { left: 295px; bottom: -6px; }
.br-h { right: -6px; bottom: -6px; }

/* Chart menu */
.menu { position: absolute; left: 695px; top: 110px; width: 283px; height: 428px; background: #fff; border: 1px solid #c6c6c6; padding: 1px 1px 0 0; box-shadow: 1px 2px 4px rgba(0, 0, 0, .2); }
.mh { height: 28px; background: #ebebeb; font-size: 15px; line-height: 27px; padding-left: 11px; color: #595959; letter-spacing: .3px; }
.mrow { height: 70px; display: flex; }
.mcell { width: 70px; height: 70px; flex: none; display: flex; align-items: center; justify-content: center; }
.mcell.sel { background: #c6c6c6; }
.mmore { height: 33px; border-top: 1px solid #e0e0e0; display: flex; align-items: center; font-size: 15px; color: #595959; padding: 0 0 2px 4px; gap: 16px; }

.tip { position: absolute; left: 742px; top: 208px; width: 177px; height: 126px; background: #fff; border: 1px solid #c8c8c8; box-shadow: 1px 1px 3px rgba(0, 0, 0, .25); padding: 7px 0 0 12px; font-size: 14.500px; color: #595959; line-height: 20px; white-space: nowrap; }
.tip-title { font-weight: 700; font-size: 15px; }
.tip-first { margin-top: 8px; }
```
